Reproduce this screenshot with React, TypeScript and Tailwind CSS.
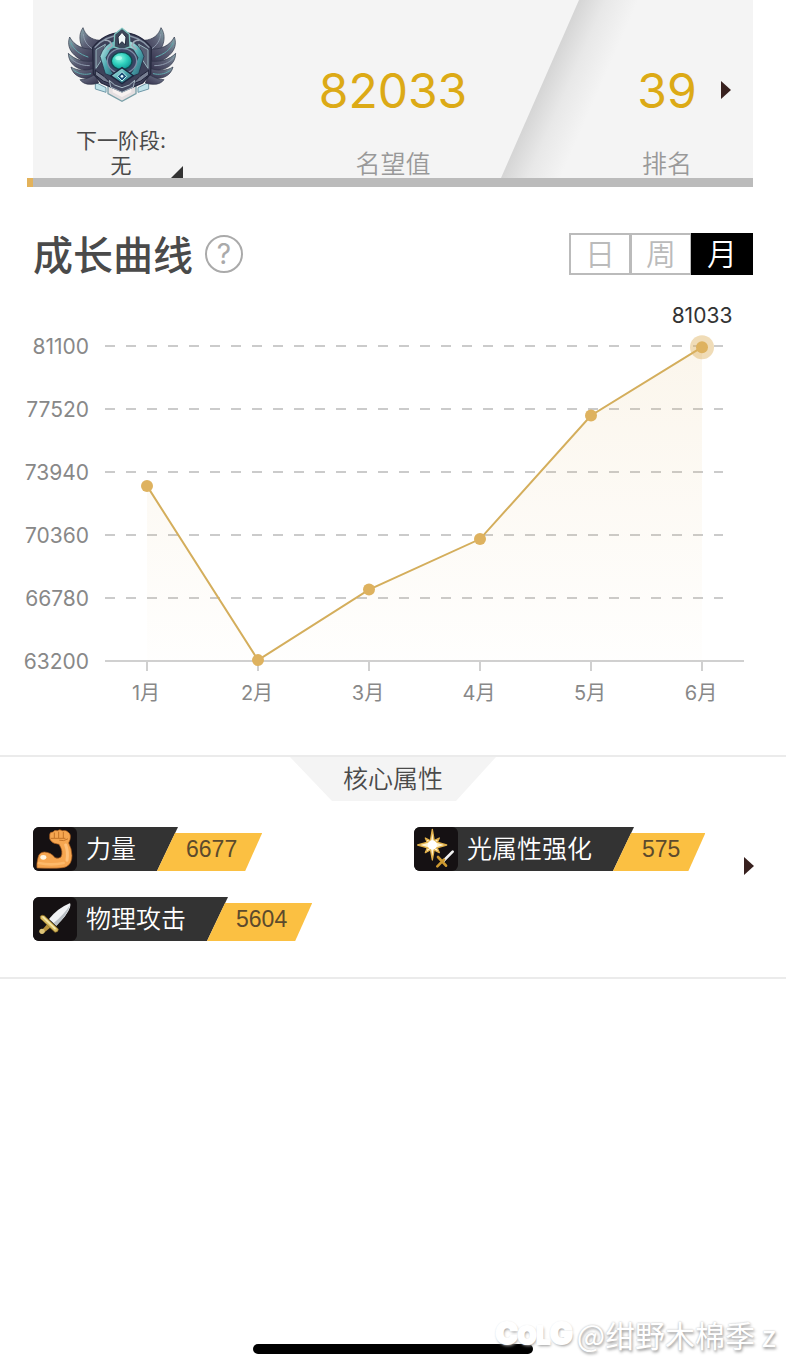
import React, { useState } from 'react';

interface Point {
    label: string;
    value: number;
}

interface Attribute {
    name: string;
    value: number;
    icon: React.ReactNode;
}

const points: Point[] = [
    { label: '1月', value: 73150 },
    { label: '2月', value: 63250 },
    { label: '3月', value: 67260 },
    { label: '4月', value: 70130 },
    { label: '5月', value: 77150 },
    { label: '6月', value: 81033 },
];

const ticks = [81100, 77520, 73940, 70360, 66780, 63200];

// One wing; the emblem mirrors it for the right side.
const Wing: React.FC = () => (
    <g stroke="#2b3044" strokeWidth="2" strokeLinejoin="round">
        <path d="M83 38 C66 62 72 98 104 128 L134 112 L134 76 C106 74 90 60 83 38Z" fill="url(#wing)" />
        <path d="M43 66 C32 98 50 126 104 148 L120 128 L114 102 C84 104 56 92 43 66Z" fill="url(#wing)" />
        <path d="M39 115 C40 148 66 168 112 168 L118 138 C84 142 58 134 39 115Z" fill="url(#wing)" />
        <path d="M47 156 C54 184 82 196 118 188 L118 160 C90 168 66 168 47 156Z" fill="url(#wing)" />
        <path d="M74 194 C84 208 104 212 130 204 L120 178 C102 188 90 194 74 194Z" fill="url(#wing)" />
        <g fill="none" stroke="#8f9bae" strokeWidth="3" strokeLinecap="round">
            <path d="M84 58 C86 78 96 92 112 102" />
            <path d="M47 84 C54 104 74 118 98 126" stroke="#5fa9ad" />
            <path d="M46 130 C58 144 80 152 102 152" />
            <path d="M58 168 C72 178 90 180 106 176" stroke="#5fa9ad" />
        </g>
    </g>
);

const Emblem: React.FC = () => (
    <svg viewBox="2 0 390 285" className="w-[130px] h-[95px]" role="img" aria-label="段位徽章">
        <defs>
            <linearGradient id="wing" x1="0" y1="0" x2="1" y2="1">
                <stop offset="0" stopColor="#8fb0b4" />
                <stop offset="0.4" stopColor="#5d6177" />
                <stop offset="1" stopColor="#2f2c47" />
            </linearGradient>
            <linearGradient id="plate" x1="0" y1="0" x2="1" y2="1">
                <stop offset="0" stopColor="#d7f6f3" />
                <stop offset="0.5" stopColor="#4ba9b0" />
                <stop offset="1" stopColor="#27566b" />
            </linearGradient>
            <radialGradient id="gem" cx="0.4" cy="0.35" r="0.7">
                <stop offset="0" stopColor="#8ff7e4" />
                <stop offset="0.5" stopColor="#2fd0bd" />
                <stop offset="1" stopColor="#0d8f92" />
            </radialGradient>
        </defs>
        <path d="M120 202 L152 218 L152 232 L120 222Z" fill="#bfe3ea" stroke="#6f98a8" strokeWidth="3" />
        <path d="M280 202 L248 218 L248 232 L280 222Z" fill="#bfe3ea" stroke="#6f98a8" strokeWidth="3" />
        <path d="M158 212 L242 212 L242 236 L200 259 L158 236Z" fill="#e4dfe1" stroke="#7aa0a8" strokeWidth="4" />
        <path d="M172 222 L228 222 L228 232 L200 246 L172 232Z" fill="#f7f1f0" />
        <Wing />
        <g transform="translate(400 0) scale(-1 1)">
            <Wing />
        </g>
        <path d="M112 98 Q146 54 200 52 Q254 54 288 98 L286 176 L262 204 L200 230 L138 204 L114 176Z" fill="#3d4159" stroke="#25283e" strokeWidth="4" />
        <path d="M118 98 Q150 62 200 60 Q250 62 282 98" fill="none" stroke="#8b98a9" strokeWidth="4" />
        <path d="M122 104 L150 88 L142 130 L122 160Z" fill="#596075" stroke="#99b7bf" strokeWidth="3" />
        <path d="M278 104 L250 88 L258 130 L278 160Z" fill="#596075" stroke="#99b7bf" strokeWidth="3" />
        <path d="M120 166 L146 184 L170 208 L144 198 L120 180Z" fill="#777f92" stroke="#1f2238" strokeWidth="3" />
        <path d="M280 166 L254 184 L230 208 L256 198 L280 180Z" fill="#777f92" stroke="#1f2238" strokeWidth="3" />
        <path d="M176 78 Q146 88 134 124 L150 176 L186 190 L168 168 L152 128 L166 104 L184 96Z" fill="url(#plate)" stroke="#1b2740" strokeWidth="2" />
        <path d="M224 78 Q254 88 266 124 L250 176 L214 190 L232 168 L248 128 L234 104 L216 96Z" fill="url(#plate)" stroke="#1b2740" strokeWidth="2" />
        <path d="M148 76 Q166 74 170 92 L156 104" fill="none" stroke="#a1abb8" strokeWidth="5" />
        <path d="M252 76 Q234 74 230 92 L244 104" fill="none" stroke="#a1abb8" strokeWidth="5" />
        <path d="M200 40 L222 58 L224 96 L200 104 L176 96 L178 58Z" fill="#3c4a5c" stroke="#7fc6c0" strokeWidth="4" />
        <path d="M200 52 L212 66 L210 90 L200 80 L190 90 L188 66Z" fill="#eff7f7" stroke="#23283c" strokeWidth="3" />
        <ellipse cx="200" cy="138" rx="44" ry="37" fill="#3a4464" stroke="#7c8da6" strokeWidth="4" />
        <ellipse cx="199" cy="138" rx="31" ry="26" fill="url(#gem)" stroke="#10494f" strokeWidth="4" />
        <ellipse cx="190" cy="129" rx="10" ry="6" fill="#b9fff2" opacity="0.7" />
        <path d="M200 158 L234 182 L200 206 L166 182Z" fill="url(#plate)" stroke="#1b2740" strokeWidth="4" />
        <path d="M200 170 L214 184 L200 198 L186 184Z" fill="#1f4d78" stroke="#bdf4f2" strokeWidth="3" />
        <circle cx="200" cy="184" r="4" fill="#e9ffff" />
        <path d="M162 196 L178 210 L200 218 L222 210 L238 196 L234 216 L200 232 L166 216Z" fill="#444a62" stroke="#a9bac6" strokeWidth="3" />
    </svg>
);

const ArmIcon: React.FC = () => (
    <svg viewBox="0 0 132 132" className="size-11" aria-hidden="true">
        <path
            d="M50 24 Q50 14 60 15 Q64 8 73 11 Q80 6 88 11 Q100 8 106 16 Q115 22 111 38 L107 48 Q116 64 117 86 Q117 110 100 119 Q88 126 12 123 Q10 112 15 92 Q18 76 34 75 Q54 76 66 92 Q76 96 84 90 Q92 74 78 52 Q60 50 54 42 Q48 36 50 24Z"
            fill="#f6a650"
            stroke="#a85a1c"
            strokeWidth="2"
        />
        <path d="M98 54 Q106 74 102 100" fill="none" stroke="#ffc17a" strokeWidth="9" strokeLinecap="round" />
        <path d="M18 108 Q54 116 92 108" fill="none" stroke="#fdb96a" strokeWidth="8" strokeLinecap="round" />
        <path d="M64 18 V32 M77 15 V32 M91 16 V33 M54 34 H96 M80 40 Q92 44 104 36" fill="none" stroke="#c47428" strokeWidth="3" strokeLinecap="round" />
        <ellipse cx="31" cy="91" rx="9" ry="7" fill="#fff6e2" />
    </svg>
);

const SwordIcon: React.FC = () => (
    <svg viewBox="0 0 132 132" className="size-11" aria-hidden="true">
        <path d="M110 19 Q114 20 111 31 Q104 54 70 86 L48 66 Q74 34 110 19Z" fill="#f1f3f5" />
        <path d="M111 24 Q106 50 70 86 L62 78 Q94 52 111 24Z" fill="#b9bfc4" />
        <path d="M44 80 L54 90 L32 108 L24 102Z" fill="#b8923c" />
        <path d="M22 58 Q26 52 34 56 L76 96 Q76 106 66 106 L28 70 Q20 66 22 58Z" fill="#d9bd62" stroke="#8b6a20" strokeWidth="2" />
        <circle cx="27" cy="103" r="8" fill="#dcc478" />
        <path d="M30 60 L66 95" stroke="#f6e8ae" strokeWidth="5" strokeLinecap="round" />
    </svg>
);

const LightIcon: React.FC = () => (
    <svg viewBox="0 0 132 132" className="size-11" aria-hidden="true">
        <g fill="#fff3cf" stroke="#e0b04a" strokeWidth="4" strokeLinejoin="round">
            <path d="M34 33 L54 44 L76 33 L66 54 L76 77 L54 66 L34 77 L43 54Z" />
            <path d="M55 7 L61 43 L98 54 L61 65 L55 99 L49 65 L11 54 L49 43Z" />
        </g>
        <circle cx="55" cy="54" r="14" fill="#fff" />
        <path d="M116 74 L88 102" stroke="#f1f1f1" strokeWidth="8" strokeLinecap="round" />
        <path d="M72 90 L96 116 M90 98 L70 118" stroke="#cf9b31" strokeWidth="8" strokeLinecap="round" />
    </svg>
);

const Arrow: React.FC = () => (
    <svg viewBox="0 0 10 20" className="w-[10px] h-5" aria-hidden="true">
        <path d="M0 0 L10 9 L0 18Z" fill="#38211f" />
    </svg>
);

const attributes: Attribute[] = [
    { name: '力量', value: 6677, icon: <ArmIcon /> },
    { name: '光属性强化', value: 575, icon: <LightIcon /> },
    { name: '物理攻击', value: 5604, icon: <SwordIcon /> },
];

const SummaryHeader: React.FC = () => (
    <header>
        <div className="relative mx-[33px] flex h-[178px] bg-[#f4f4f4]">
            {/* Slanted fold between the two numbers */}
            <svg viewBox="0 0 160 178" className="absolute right-[92px] top-0 h-full w-40" aria-hidden="true">
                <defs>
                    <linearGradient id="fold" gradientUnits="userSpaceOnUse" x1="39" y1="89" x2="89" y2="111">
                        <stop offset="0" stopColor="#d5d5d5" />
                        <stop offset="0.45" stopColor="#e8e8e8" />
                        <stop offset="1" stopColor="#f4f4f4" />
                    </linearGradient>
                </defs>
                <path d="M78 0 H160 V178 H0Z" fill="url(#fold)" />
            </svg>
            <div className="relative flex w-44 flex-col items-center pt-[15px]">
                <Emblem />
                <p className="mt-[18px] text-center text-[21px] leading-[25px] text-[#4a4a4a]">
                    下一阶段:
                    <br />
                    无
                </p>
                <span className="absolute bottom-0 right-[26px] h-3 w-3 bg-[#333] [clip-path:polygon(100%_0,100%_100%,0_100%)]" />
            </div>
            <div className="relative flex-1 pt-[62px] text-center">
                <p className="text-5xl leading-[58px] text-[#dcaa16]">82033</p>
                <p className="mt-[30px] text-[25px] leading-7 font-[350] text-[#999]">名望值</p>
            </div>
            <div className="relative w-44 pl-1 pt-[62px] text-center">
                <div className="grid grid-cols-[1fr_auto_1fr] items-center">
                    <span />
                    <p className="text-5xl leading-[58px] text-[#dcaa16]">39</p>
                    <button type="button" aria-label="查看排名" className="ml-6 w-[10px]">
                        <Arrow />
                    </button>
                </div>
                <p className="mt-[30px] text-[25px] leading-7 font-[350] text-[#999]">排名</p>
            </div>
        </div>
        <div className="ml-[27px] mr-[33px] h-[9px] bg-[#bbb]">
            <div className="h-full w-[6px] bg-[#e3b25a]" />
        </div>
    </header>
);

const GrowthChart: React.FC = () => {
    const top = 71;
    const bottom = 386;
    const yOf = (value: number) => bottom - ((value - 63200) / (81100 - 63200)) * (bottom - top);
    const xOf = (index: number) => 147 + index * 111;
    const line = points.map((p, i) => `${xOf(i)},${yOf(p.value)}`).join(' ');
    const last = points.length - 1;

    return (
        <svg viewBox="0 0 786 445" className="block w-full" role="img" aria-label="成长曲线图">
            <defs>
                <linearGradient id="area" x1="0" y1="0" x2="0" y2="1">
                    <stop offset="0" stopColor="#deb25f" stopOpacity="0.12" />
                    <stop offset="1" stopColor="#deb25f" stopOpacity="0.01" />
                </linearGradient>
            </defs>
            {ticks.map((tick) => (
                <g key={tick}>
                    <text x="89" y={yOf(tick) + 8} textAnchor="end" fontSize="21" fill="#888">{tick}</text>
                    {tick !== 63200 && (
                        <line x1="105" x2="723" y1={yOf(tick)} y2={yOf(tick)} stroke="#cbcbcb" strokeWidth="2" strokeDasharray="10 11" />
                    )}
                </g>
            ))}
            <line x1="105" x2="744" y1={bottom} y2={bottom} stroke="#d0d0d0" strokeWidth="2" />
            <polygon points={`${xOf(0)},${bottom} ${line} ${xOf(last)},${bottom}`} fill="url(#area)" />
            <polyline points={line} fill="none" stroke="#d4ae5c" strokeWidth="2" />
            {points.map((p, i) => (
                <g key={p.label}>
                    <line x1={xOf(i)} x2={xOf(i)} y1={bottom} y2={bottom + 10} stroke="#d0d0d0" strokeWidth="2" />
                    <text x={xOf(i) - 1} y="425" textAnchor="middle" fontSize="20" fill="#888">{p.label}</text>
                    {i === last && <circle cx={xOf(i)} cy={yOf(p.value)} r="12" fill="#deb25f" opacity="0.45" />}
                    <circle cx={xOf(i)} cy={yOf(p.value)} r="6" fill="#deb25f" />
                </g>
            ))}
            <text x={xOf(last)} y="48" textAnchor="middle" fontSize="21" fill="#333">{points[last].value}</text>
        </svg>
    );
};

const AttributeTag: React.FC<{ item: Attribute }> = ({ item }) => (
    <li className="flex items-end">
        <div className="relative flex h-11 items-center rounded-l-md bg-[#333] pr-[42px] [clip-path:polygon(0_0,100%_0,calc(100%-21px)_100%,0_100%)]">
            <span className="size-11 rounded-md bg-[#151113]">{item.icon}</span>
            <span className="ml-[9px] whitespace-nowrap text-[25px] leading-none font-[350] text-white">{item.name}</span>
        </div>
        <span className="-ml-[21px] h-[38px] bg-[#fbc042] pl-[29px] pr-[25px] font-['Liberation_Sans',sans-serif] text-[23px] leading-8 text-[#5c4a2c] [clip-path:polygon(18px_0,100%_0,calc(100%-17px)_100%,0_100%)]">
            {item.value}
        </span>
    </li>
);

const App: React.FC = () => {
    const [range, setRange] = useState('月');

    return (
        <div className="relative flex min-h-screen flex-col bg-white font-['Inter','Noto_Sans_CJK_SC',sans-serif]">
            <SummaryHeader />

            <section>
                <div className="flex items-center justify-between px-[33px] pt-[46px]">
                    <div className="flex items-center gap-3">
                        <h2 className="text-[40px] leading-[46px] -mb-1 font-medium text-[#4a4a4a]">成长曲线</h2>
                        <button type="button" aria-label="说明" className="size-[38px] rounded-full border-2 border-[#aaa] text-[28px] leading-none text-[#aaa]">
                            ?
                        </button>
                    </div>
                    <div className="flex h-[42px]">
                        {['日', '周', '月'].map((item) => (
                            <button
                                key={item}
                                type="button"
                                aria-pressed={range === item}
                                onClick={() => setRange(item)}
                                className={`-ml-px w-[62px] border-2 text-3xl leading-none font-[350] ${range === item ? 'border-black bg-black text-white' : 'border-[#bbb] text-[#bbb]'}`}
                            >
                                {item}
                            </button>
                        ))}
                    </div>
                </div>
                <GrowthChart />
            </section>

            <section className="mt-[35px] border-y-2 border-[#ebebeb] pb-9">
                <h3 className="mx-auto h-11 w-[206px] bg-[#f4f4f4] text-center text-[25px] leading-[44px] font-[350] text-[#4a4a4a] [clip-path:polygon(0_0,100%_0,calc(100%-40px)_100%,42px_100%)]">
                    核心属性
                </h3>
                <div className="flex items-start pl-[33px] pr-8 pt-[26px]">
                    <ul className="grid flex-1 grid-cols-[381fr_330fr] gap-y-[26px]">
                        {attributes.map((item) => (
                            <AttributeTag key={item.name} item={item} />
                        ))}
                    </ul>
                    <button type="button" aria-label="更多属性" className="flex h-20 items-center">
                        <Arrow />
                    </button>
                </div>
            </section>

            <footer className="mt-auto pb-4">
                <div className="mx-auto h-[10px] w-[280px] rounded-full bg-black" />
                {/* Forum watermark laid over the home bar */}
                <div className="absolute bottom-[18px] right-[10px] flex items-center whitespace-nowrap font-['Noto_Sans_CJK_SC',sans-serif] text-3xl leading-9 text-white [text-shadow:0_0_2px_#bbb,1px_2px_3px_#999]">
                    <span className="mr-1 flex items-baseline font-['Inter','Noto_Sans_CJK_SC',sans-serif] text-3xl font-black [-webkit-text-stroke:2px_#fff]">
                        C<span className="text-2xl">OL</span>G
                    </span>
                    <span>@绀野木棉季 z</span>
                </div>
            </footer>
        </div>
    );
};

export default App;
